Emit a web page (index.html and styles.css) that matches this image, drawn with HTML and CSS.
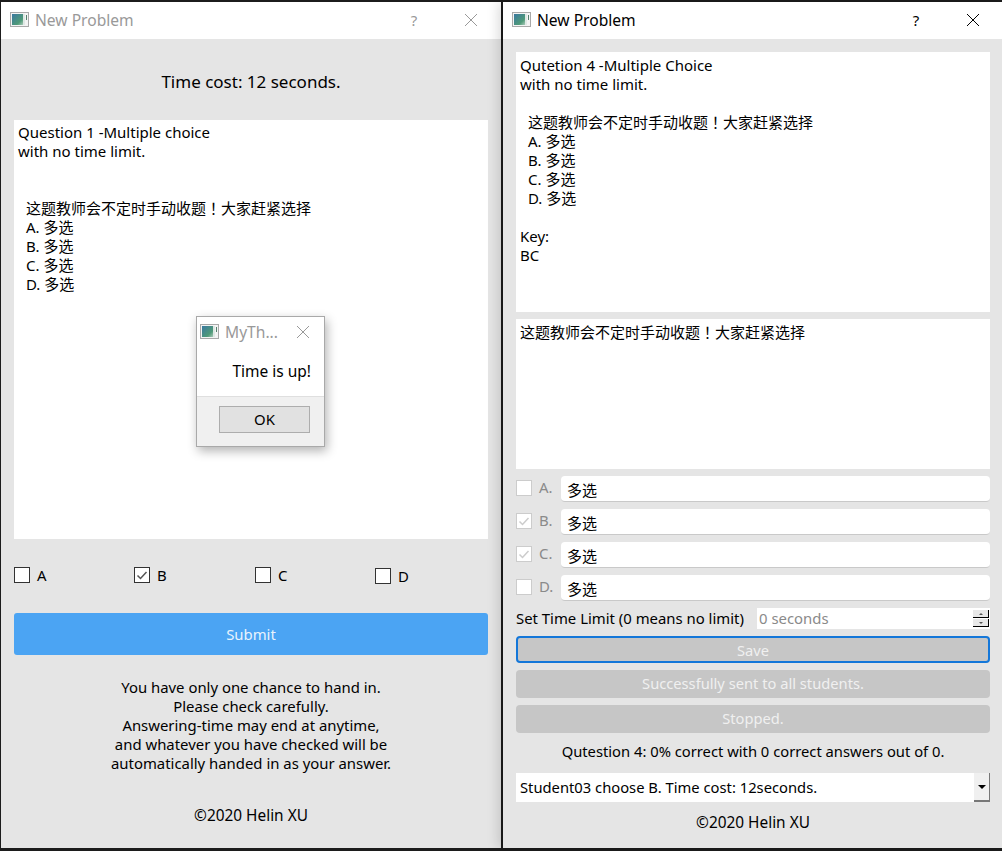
FILE: index.html
```html
<!DOCTYPE html>
<html lang="en">
<head>
    <meta charset="UTF-8">
    <meta name="viewport" content="width=device-width, initial-scale=1.0">
    <title>New Problem</title>
    <link rel="stylesheet" href="styles.css">
</head>
<body>
    <svg class="defs" width="0" height="0">
      <defs>
        <linearGradient id="iconFill" x1="0" y1="0" x2="1" y2="1">
          <stop offset="0" stop-color="#3a78a0"/>
          <stop offset="0.7" stop-color="#4f9a78"/>
          <stop offset="1" stop-color="#a9c9b8"/>
        </linearGradient>
        <symbol id="appIcon" viewBox="0 0 19 15">
          <rect x="0.5" y="0.5" width="18" height="14" fill="#f4f4f4" stroke="#a9a9a9"/>
          <rect x="2" y="2" width="11" height="11" fill="url(#iconFill)"/>
          <rect x="13" y="2" width="2" height="11" fill="#dfe8e4"/>
          <rect x="16" y="3" width="1" height="5" fill="#55806c"/>
        </symbol>
        <symbol id="closeIcon" viewBox="0 0 14 14">
          <path d="M1 1 L13 13 M13 1 L1 13" fill="none" stroke="currentColor" stroke-width="1"/>
        </symbol>
        <symbol id="checkIcon" viewBox="0 0 14 14">
          <path d="M2.5 7.5 L5.5 10.5 L11.5 4" fill="none" stroke="currentColor" stroke-width="1.5"/>
        </symbol>
      </defs>
    </svg>

    <div class="desk">
      <div class="window studentWindow">
        <div class="titleBar inactive">
          <svg class="appIcon"><use href="#appIcon"/></svg>
          <span class="titleText">New Problem</span>
          <span class="helpBtn">?</span>
          <svg class="closeBtn"><use href="#closeIcon"/></svg>
        </div>
        <div class="body studentBody">
          <div class="timeCost">Time cost: 12 seconds.</div>
          <div class="paper questionBox">
            <div>Question 1 -Multiple choice</div>
            <div>with no time limit.</div>
            <div class="blank"></div>
            <div class="blank"></div>
            <div class="indent">这题教师会不定时手动收题！大家赶紧选择</div>
            <div class="indent">A. 多选</div>
            <div class="indent">B. 多选</div>
            <div class="indent">C. 多选</div>
            <div class="indent">D. 多选</div>
          </div>
          <div class="choices">
            <div class="choice"><span class="checkBox"></span>A</div>
            <div class="choice"><span class="checkBox"><svg><use href="#checkIcon"/></svg></span>B</div>
            <div class="choice"><span class="checkBox"></span>C</div>
            <div class="choice lower"><span class="checkBox"></span>D</div>
          </div>
          <div class="submitBtn">Submit</div>
          <div class="notice">
            <div>You have only one chance to hand in.</div>
            <div>Please check carefully.</div>
            <div>Answering-time may end at anytime,</div>
            <div>and whatever you have checked will be</div>
            <div>automatically handed in as your answer.</div>
          </div>
          <div class="copyright studentCopy">©2020 Helin XU</div>
        </div>

        <div class="dialog">
          <div class="dialogTitle inactive">
            <svg class="appIcon"><use href="#appIcon"/></svg>
            <span class="titleText">MyTh...</span>
            <svg class="closeBtn"><use href="#closeIcon"/></svg>
          </div>
          <div class="dialogMsg">Time is up!</div>
          <div class="dialogFoot"><div class="okBtn">OK</div></div>
        </div>
      </div>

      <div class="window teacherWindow">
        <div class="titleBar">
          <svg class="appIcon"><use href="#appIcon"/></svg>
          <span class="titleText">New Problem</span>
          <span class="helpBtn">?</span>
          <svg class="closeBtn"><use href="#closeIcon"/></svg>
        </div>
        <div class="body teacherBody">
          <div class="paper previewBox">
            <div>Qutetion 4 -Multiple Choice</div>
            <div>with no time limit.</div>
            <div class="blank"></div>
            <div class="indent">这题教师会不定时手动收题！大家赶紧选择</div>
            <div class="indent">A. 多选</div>
            <div class="indent">B. 多选</div>
            <div class="indent">C. 多选</div>
            <div class="indent">D. 多选</div>
            <div class="blank"></div>
            <div>Key:</div>
            <div>BC</div>
          </div>
          <div class="paper stemBox">这题教师会不定时手动收题！大家赶紧选择</div>
          <div class="optionRow">
            <span class="checkBox off"></span><span class="optionKey">A.</span>
            <div class="optionInput">多选</div>
          </div>
          <div class="optionRow">
            <span class="checkBox off"><svg><use href="#checkIcon"/></svg></span><span class="optionKey">B.</span>
            <div class="optionInput">多选</div>
          </div>
          <div class="optionRow">
            <span class="checkBox off"><svg><use href="#checkIcon"/></svg></span><span class="optionKey">C.</span>
            <div class="optionInput">多选</div>
          </div>
          <div class="optionRow">
            <span class="checkBox off"></span><span class="optionKey">D.</span>
            <div class="optionInput">多选</div>
          </div>
          <div class="limitRow">
            <span class="limitLabel">Set Time Limit (0 means no limit)</span>
            <div class="spinBox">
              <span class="spinValue">0 seconds</span>
              <div class="spinBtns">
                <span class="spinBtn"><i class="tri up"></i></span>
                <span class="spinBtn"><i class="tri down"></i></span>
              </div>
            </div>
          </div>
          <div class="flatBtn saveBtn">Save</div>
          <div class="flatBtn sentBtn">Successfully sent to all students.</div>
          <div class="flatBtn stopBtn">Stopped.</div>
          <div class="stats">Qutestion 4: 0% correct with 0 correct answers out of 0.</div>
          <div class="comboBox">
            <span class="comboText">Student03 choose B. Time cost: 12seconds.</span>
            <span class="comboArrow"><i class="tri down big"></i></span>
          </div>
          <div class="copyright teacherCopy">©2020 Helin XU</div>
        </div>
      </div>
    </div>
</body>
</html>
```

FILE: styles.css
```css
html, body {
    margin: 0;
    height: 100%;
}
body {
    background-color: #1c1c1c;
    font-family: "Noto Sans", "Noto Sans CJK TC", sans-serif;
    font-size: 14.9px;
    color: #000;
    overflow: hidden;
}
.defs {
    position: absolute;
}
.desk {
    display: flex;
    gap: 2px;
    padding: 2px 0 0 1px;
    height: 846px;
}
.window {
    position: relative;
    display: flex;
    flex-direction: column;
    height: 846px;
}
.studentWindow {
    width: 500px;
}
.teacherWindow {
    width: 499px;
    box-shadow: -4px 0 12px rgba(0, 0, 0, 0.16);
}

/* title bars */
.titleBar {
    box-sizing: border-box;
    display: flex;
    align-items: center;
    flex: none;
    height: 37px;
    background-color: #fff;
    padding-bottom: 2px;
}
.appIcon {
    flex: none;
    width: 19px;
    height: 15px;
    margin-left: 9px;
}
.titleText {
    margin-left: 6px;
    font-size: 15.6px;
}
.helpBtn {
    margin-left: auto;
    width: 16px;
    text-align: center;
    font-size: 15px;
}
.closeBtn {
    flex: none;
    width: 14px;
    height: 14px;
    margin: 0 23px 0 42px;
}
.teacherWindow .closeBtn {
    margin-right: 22px;
}
.inactive {
    color: #999;
}

.body {
    flex: 1;
    display: flex;
    flex-direction: column;
    background-color: #e5e5e5;
}
.studentBody {
    padding: 0 13px;
}
.teacherBody {
    padding: 13px 12px 0 13px;
}
.paper {
    background-color: #fff;
    font-size: 15px;
    line-height: 19px;
    padding: 4px;
}
.blank {
    height: 19px;
}
.indent {
    margin-left: 8px;
}

/* left window */
.timeCost {
    text-align: center;
    font-size: 17px;
    line-height: 24px;
    margin-top: 31px;
    height: 50px;
}
.questionBox {
    height: 413px;
    padding-top: 3px;
    padding-bottom: 3px;
}
.choices {
    display: grid;
    grid-template-columns: 120px 121px 120px 1fr;
    margin-top: 27px;
}
.choice {
    display: flex;
    align-items: center;
    gap: 7px;
    height: 18px;
    line-height: 16px;
}
.lower {
    margin-top: 1px;
}
.checkBox {
    flex: none;
    display: block;
    width: 14px;
    height: 14px;
    border: 1px solid #333;
    background-color: #fff;
    color: #555;
}
.checkBox svg {
    display: block;
    width: 14px;
    height: 14px;
}
.checkBox.off {
    border-color: #ccc;
    color: #ccc;
}
.submitBtn {
    margin-top: 28px;
    height: 42px;
    line-height: 42px;
    border-radius: 3px;
    text-align: center;
    color: #e8f3fd;
    background-color: #4ba4f3;
}
.notice {
    margin-top: 23px;
    text-align: center;
    line-height: 19px;
}
.copyright {
    text-align: center;
    line-height: 19px;
    font-size: 15.4px;
}
.studentCopy {
    margin-top: 33px;
}

/* message box */
.dialog {
    position: absolute;
    left: 195px;
    top: 314px;
    width: 127px;
    height: 129px;
    display: flex;
    flex-direction: column;
    background-color: #fff;
    border: 1px solid #a9a9a9;
    box-shadow: 2px 4px 10px rgba(0, 0, 0, 0.3);
}
.dialogTitle {
    box-sizing: border-box;
    display: flex;
    align-items: center;
    flex: none;
    height: 31px;
    padding-bottom: 2px;
}
.dialogTitle .appIcon {
    margin-left: 3px;
}
.dialogTitle .titleText {
    margin-left: 6px;
}
.dialogTitle .closeBtn {
    margin: 0 0 0 auto;
    position: relative;
    left: -14px;
}
.dialogMsg {
    flex: 1;
    text-align: right;
    padding: 14px 13px 0 0;
    line-height: 19px;
    font-size: 15.5px;
}
.dialogFoot {
    flex: none;
    height: 50px;
    box-sizing: border-box;
    padding: 9px 14px 0 22px;
    background-color: #f0f0f0;
    border-top: 1px solid #dfdfdf;
}
.okBtn {
    box-sizing: border-box;
    height: 27px;
    line-height: 25px;
    text-align: center;
    background-color: #e1e1e1;
    border: 1px solid #adadad;
}

/* right window */
.previewBox {
    height: 252px;
}
.stemBox {
    margin-top: 7px;
    height: 142px;
}
.optionRow {
    display: flex;
    align-items: center;
    height: 26px;
    margin-top: 7px;
}
.optionRow .checkBox {
    margin-bottom: 2px;
}
.optionKey {
    width: 22px;
    margin-left: 7px;
    margin-bottom: 4px;
    color: #8a8a8a;
}
.optionInput {
    flex: 1;
    height: 25px;
    line-height: 28px;
    padding-left: 6px;
    font-size: 15px;
    background-color: #fff;
    border-bottom: 1px solid #c9c9c9;
    border-radius: 4px;
}
.limitRow {
    display: flex;
    align-items: center;
    height: 21px;
    margin-top: 7px;
}
.limitLabel {
    width: 241px;
    flex: none;
    padding-bottom: 2px;
}
.spinBox {
    flex: 1;
    display: flex;
    align-items: center;
    justify-content: space-between;
    height: 21px;
    padding: 0 1px 0 2px;
    background-color: #fff;
    color: #8a8a8a;
}
.spinValue {
    padding-bottom: 2px;
}
.spinBtns {
    display: flex;
    flex-direction: column;
    gap: 1px;
}
.spinBtn {
    display: flex;
    align-items: center;
    justify-content: center;
    width: 15px;
    height: 7px;
    background-color: #e8e8e8;
    border-bottom: 1px solid #000;
    border-right: 1px solid #000;
}
.tri {
    display: block;
    width: 0;
    height: 0;
    border-left: 2px solid transparent;
    border-right: 2px solid transparent;
}
.tri.up {
    border-bottom: 2px solid #555;
}
.tri.down {
    border-top: 2px solid #555;
}
.tri.down.big {
    border-left-width: 4px;
    border-right-width: 4px;
    border-top: 4px solid #000;
}
.flatBtn {
    box-sizing: border-box;
    height: 28px;
    line-height: 27px;
    margin-top: 7px;
    font-size: 14.7px;
    text-align: center;
    color: #f0f0f0;
    background-color: #c6c6c6;
    border-radius: 4px;
}
.saveBtn {
    height: 27px;
    line-height: 25px;
    border: 2px solid #1477d9;
}
.stats {
    margin-top: 9px;
    line-height: 19px;
    text-align: center;
    font-size: 14.75px;
}
.comboBox {
    display: flex;
    align-items: center;
    justify-content: space-between;
    height: 29px;
    margin-top: 12px;
    padding-left: 4px;
    background-color: #fff;
}
.comboText {
    font-size: 14.75px;
    padding-bottom: 2px;
}
.comboArrow {
    box-sizing: border-box;
    display: flex;
    align-items: center;
    justify-content: center;
    width: 16px;
    height: 29px;
    background-color: #f0f0f0;
    border-right: 1px solid #777;
    border-bottom: 2px solid #777;
}
.teacherCopy {
    margin-top: 11px;
}
```
